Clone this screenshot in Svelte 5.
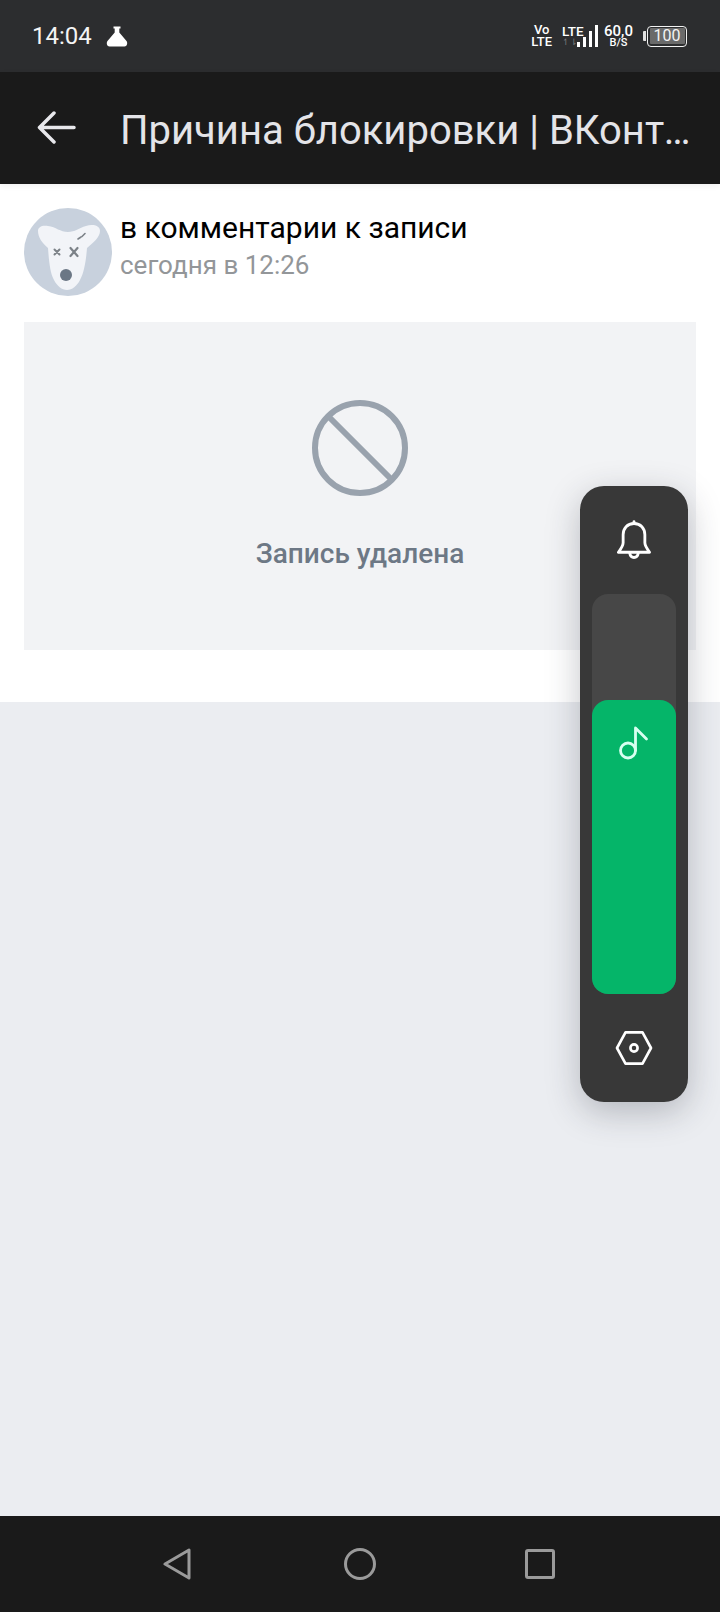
<script>
  let title = 'Причина блокировки | ВКонтакте';
</script>

<div class="screen">
  <div class="status-bar">
    <span class="time">14:04</span>
    <svg class="flask" width="22" height="21" viewBox="0 0 22 21">
      <path d="M7.500 0.500h7v2h-1.200v4L20.500 15c1.500 2 .5 5.500-2 5.500H3.500c-2.500 0-3.500-3.500-2-5.500L8.700 6.500v-4H7.500z" fill="#fff" />
    </svg>
    <div class="indicators">
      <div class="stack volte"><span>Vo</span><span>LTE</span></div>
      <div class="lte">
        <div class="stack lte-text"><span>LTE</span><span class="arrows">↿⇂</span></div>
        <svg class="bars" width="21" height="22" viewBox="0 0 21 22">
          <rect x="0" y="17" width="3" height="5" fill="#fff" />
          <rect x="6" y="12" width="3" height="10" fill="#fff" />
          <rect x="12" y="6" width="3" height="16" fill="#fff" />
          <rect x="18" y="0" width="3" height="22" fill="#fff" />
        </svg>
      </div>
      <div class="stack speed"><span>60,0</span><span class="unit">B/S</span></div>
      <div class="battery">
        <span class="cap"></span>
        <div class="battery-body"><span>100</span></div>
      </div>
    </div>
  </div>

  <header class="toolbar">
    <svg class="back" width="40" height="34" viewBox="0 0 40 34" fill="none" stroke="#e8e8ec" stroke-width="3.500" stroke-linecap="round" stroke-linejoin="round">
      <path d="M37 16.500H3M17 2L2.500 16.500 17 31" />
    </svg>
    <h1>{title}</h1>
  </header>

  <main class="content">
    <section class="card">
      <div class="head">
        <svg class="avatar" width="88" height="88" viewBox="0 0 88 88">
          <circle cx="44" cy="44" r="44" fill="#c8d1dd" />
          <path d="M14 23c0-4 4-6 10-5 8 1 12 6 20 6 7 0 11-4 18-6 6-2 14-1 14 5 0 6-7 12-13 17-1 13-3 25-7 32-3 6-8 10-13 10s-10-4-13-10c-4-7-5-19-6-32-6-5-10-11-10-17z" fill="#f2f4f8" />
          <circle cx="42" cy="67" r="6" fill="#6b7785" />
          <g stroke="#7c8288" stroke-linecap="round">
            <path d="M30.500 41.500l5 5M35.500 41.500l-5 5" stroke-width="2" />
            <path d="M46.500 40l7 8M53.500 40l-7 8" stroke-width="2.200" />
            <path d="M54 31l3-2M58 28.500l3-3" stroke-width="1.600" />
          </g>
        </svg>
        <div class="meta">
          <div class="name">в комментарии к записи</div>
          <div class="date">сегодня в 12:26</div>
        </div>
      </div>

      <div class="removed">
        <svg width="96" height="96" viewBox="0 0 96 96" fill="none" stroke="#99a2ad" stroke-width="6">
          <circle cx="48" cy="48" r="45" />
          <path d="M17 17l62 62" />
        </svg>
        <div class="removed-text">Запись удалена</div>
      </div>
    </section>
  </main>

  <nav class="nav-bar">
    <svg width="28" height="32" viewBox="0 0 28 32" fill="none" stroke="#9a9a9a" stroke-width="3" stroke-linejoin="round">
      <path d="M26 2v28L2 16z" />
    </svg>
    <svg class="home" width="32" height="32" viewBox="0 0 32 32" fill="none" stroke="#9a9a9a" stroke-width="3">
      <circle cx="16" cy="16" r="14.500" />
    </svg>
    <svg width="30" height="30" viewBox="0 0 30 30" fill="none" stroke="#9a9a9a" stroke-width="3" stroke-linejoin="round">
      <rect x="1.500" y="1.500" width="27" height="27" rx="1.500" />
    </svg>
  </nav>

  <aside class="volume-panel">
    <svg class="bell" width="34" height="40" viewBox="0 0 36 42" fill="none" stroke="#fff" stroke-width="3" stroke-linecap="round" stroke-linejoin="round">
      <path d="M18 3.500c-7 0-11.500 5-11.500 12V24c0 3-2 6-5 10h33c-3-4-5-7-5-10v-8.500c0-7-4.500-12-11.500-12z" />
      <path d="M18 1.500v2M13.500 35c.5 3 2.200 4.500 4.500 4.500s4-1.500 4.500-4.500" />
    </svg>
    <div class="slider">
      <div class="slider-fill">
        <svg width="32" height="36" viewBox="0 0 32 36" fill="none" stroke="#d8fff0" stroke-width="2.800" stroke-linecap="round" stroke-linejoin="round">
          <circle cx="10" cy="25.500" r="7.500" />
          <path d="M17.500 25.500V3L28.500 14" />
        </svg>
      </div>
    </div>
    <svg class="gear" width="38" height="34" viewBox="0 0 40 36" fill="none" stroke="#fff" stroke-width="2.800" stroke-linejoin="round">
      <path d="M11 1.500h18L38 18l-9 16.500H11L2 18z" />
      <circle cx="20" cy="18" r="3.800" />
    </svg>
  </aside>
</div>

<style>
  :global(body) {
    margin: 0;
    background: #ebedf1;
  }

  .screen {
    position: relative;
    width: 720px;
    height: 1612px;
    display: flex;
    flex-direction: column;
    overflow: hidden;
    font-family: Roboto, "Liberation Sans", sans-serif;
    background: #ebedf1;
  }

  .status-bar {
    height: 72px;
    flex-shrink: 0;
    box-sizing: border-box;
    padding: 0 33px 0 32px;
    display: flex;
    align-items: center;
    background: #2c2d2f;
    color: #fff;
  }

  .time {
    font-size: 24px;
    line-height: 28px;
    color: #f4f4f4;
  }

  .flask {
    margin-left: 14px;
  }

  .indicators {
    margin-left: auto;
    display: flex;
    align-items: center;
  }

  .stack {
    display: flex;
    flex-direction: column;
    align-items: center;
    font-weight: 500;
    color: #fff;
  }

  .volte {
    font-size: 13px;
    line-height: 12px;
  }

  .lte {
    position: relative;
    display: flex;
    align-items: flex-end;
    width: 36px;
    height: 22px;
    margin-left: 10px;
  }

  .lte-text {
    font-size: 13.500px;
    line-height: 13px;
    align-items: flex-start;
  }

  .arrows {
    font-size: 9px;
    line-height: 9px;
    color: #77797b;
  }

  .bars {
    position: absolute;
    right: 0;
    bottom: 0;
  }

  .speed {
    margin-left: 6px;
    font-size: 15px;
    line-height: 13px;
  }

  .unit {
    font-size: 11px;
    line-height: 10px;
  }

  .battery {
    margin-left: 10px;
    display: flex;
    align-items: center;
    gap: 1px;
  }

  .cap {
    width: 3px;
    height: 10px;
    background: #e0e0e0;
    border-radius: 1px 0 0 1px;
  }

  .battery-body {
    width: 40px;
    height: 21px;
    box-sizing: border-box;
    border: 1.500px solid #f2f2f2;
    border-radius: 4px;
    padding: 1.500px;
    display: flex;
  }

  .battery-body span {
    flex: 1;
    background: #6a6a6a;
    font-size: 16px;
    line-height: 15px;
    text-align: center;
    color: #f4f4f4;
    border-radius: 1px;
  }

  .toolbar {
    position: relative;
    height: 112px;
    flex-shrink: 0;
    box-sizing: border-box;
    padding: 0 24px 0 37px;
    display: flex;
    align-items: center;
    background: #1a1a1a;
    box-shadow: 0 2px 6px rgba(0, 0, 0, 0.06);
  }

  .back {
    flex-shrink: 0;
    margin-right: 43px;
    margin-top: -1px;
  }

  h1 {
    margin: 6px 0 0;
    min-width: 0;
    font-size: 40px;
    font-weight: 400;
    line-height: 48px;
    color: #e4e4e8;
    white-space: nowrap;
    overflow: hidden;
    text-overflow: ellipsis;
  }

  .content {
    flex: 1;
  }

  .card {
    height: 518px;
    box-sizing: border-box;
    padding: 24px 24px 0;
    background: #fff;
  }

  .head {
    display: flex;
    gap: 8px;
  }

  .avatar {
    display: block;
    flex-shrink: 0;
  }

  .meta {
    padding-top: 2px;
  }

  .name {
    font-size: 30px;
    line-height: 36px;
    color: #000;
  }

  .date {
    margin-top: 1px;
    font-size: 26px;
    line-height: 36px;
    color: #939699;
  }

  .removed {
    margin-top: 26px;
    height: 328px;
    box-sizing: border-box;
    padding-top: 78px;
    display: flex;
    flex-direction: column;
    align-items: center;
    background: #f2f3f5;
  }

  .removed-text {
    margin-top: 41px;
    font-size: 28px;
    font-weight: 500;
    line-height: 34px;
    color: #6d7885;
  }

  .nav-bar {
    height: 96px;
    flex-shrink: 0;
    box-sizing: border-box;
    padding: 0 165px 0 163px;
    display: flex;
    justify-content: space-between;
    align-items: center;
    background: #1a1a1a;
  }

  .home {
    margin: 0 -2px 0 2px;
  }

  .volume-panel {
    position: absolute;
    left: 580px;
    top: 486px;
    width: 108px;
    height: 616px;
    box-sizing: border-box;
    padding: 0 12px;
    display: flex;
    flex-direction: column;
    align-items: center;
    background: #383838;
    border-radius: 24px;
    box-shadow: 0 10px 34px rgba(40, 44, 56, 0.28);
  }

  .bell {
    margin-top: 34px;
    flex-shrink: 0;
  }

  .slider {
    margin-top: 34px;
    width: 84px;
    height: 400px;
    flex-shrink: 0;
    display: flex;
    flex-direction: column;
    justify-content: flex-end;
    background: #474747;
    border-radius: 16px;
  }

  .slider-fill {
    height: 294px;
    box-sizing: border-box;
    padding-top: 25px;
    display: flex;
    justify-content: center;
    background: #05b569;
    border-radius: 16px;
  }

  .gear {
    margin-top: 37px;
    flex-shrink: 0;
  }
</style>
